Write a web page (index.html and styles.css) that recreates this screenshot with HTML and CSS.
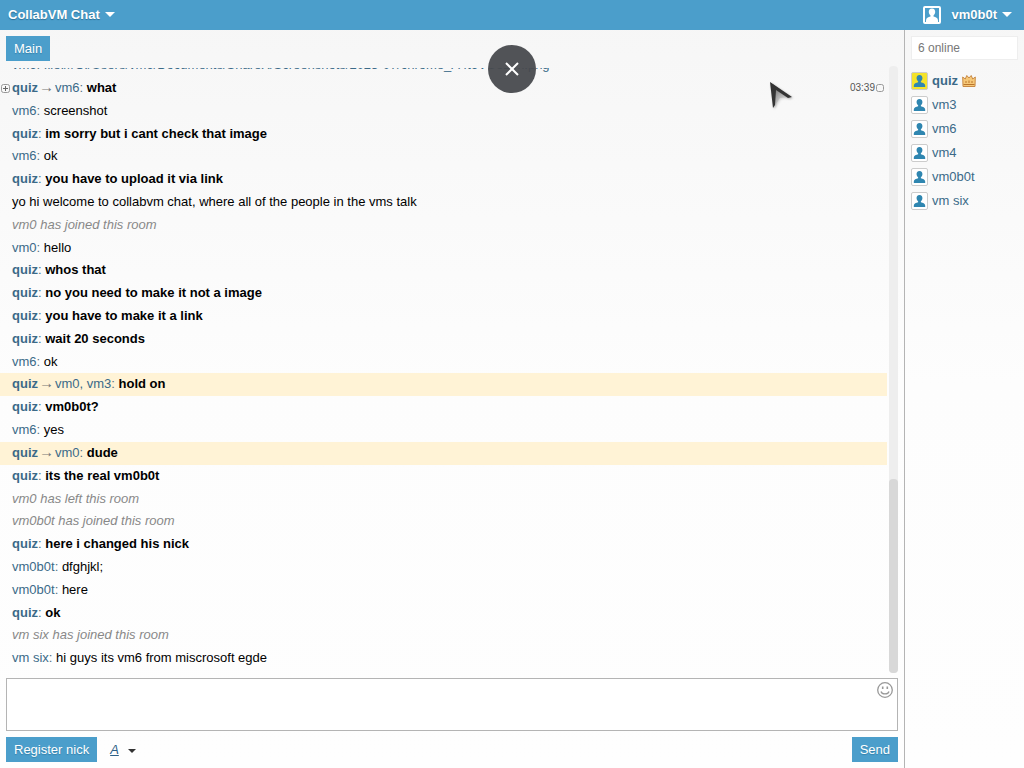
FILE: index.html
```html
<!DOCTYPE html>
<html lang="en">
<head>
    <meta charset="UTF-8">
    <meta name="viewport" content="width=device-width, initial-scale=1.0">
    <title>CollabVM Chat</title>
    <link rel="stylesheet" href="styles.css">
</head>
<body>

<!-- Shared icons -->
<svg class="sprite" aria-hidden="true">
    <symbol id="person" viewBox="0 0 16 16">
        <path d="M8 .5C5.400.5 4.300 2.400 4.400 4.700c.1 1.700.9 3 1.900 3.700v1.100C4 10.100 1 10.900 1 13.400V15.500h14v-2.100c0-2.500-3-3.300-5.300-3.900V8.400c1-.7 1.800-2 1.900-3.700C11.700 2.400 10.600.5 8 .5z"/>
    </symbol>
</svg>

<header class="top-bar">
    <button type="button" class="menu-button">CollabVM Chat <span class="caret"></span></button>
    <button type="button" class="menu-button">
        <svg class="my-avatar" viewBox="0 0 18 18" aria-hidden="true">
            <rect x="1" y="1" width="16" height="16" rx="1" fill="#4b9ecb" stroke="#fff" stroke-width="2"/>
            <path fill="#fff" d="M9 2.500c-2.300 0-3.300 1.600-3.200 3.500.1 1.600.8 2.700 1.700 3.400v1.200C5.300 11.200 3 12 3 14.500V17h12v-2.500c0-2.500-2.300-3.300-4.500-3.900V9.400c.9-.7 1.600-1.800 1.700-3.400.1-1.900-.9-3.500-3.200-3.500z"/>
        </svg>
        <span class="my-nick">vm0b0t</span> <span class="caret"></span>
    </button>
</header>

<div class="chat">
    <main class="room">
        <nav class="tabs">
            <button type="button" class="button">Main</button>
        </nav>

        <!-- Message log -->
        <div class="log">
            <ul class="messages">
                <li><a href="#">vm6</a>: <a href="#">file:///C:/Users/vm6/Documents/ShareX/Screenshots/2023-07/chrome_A4t6VUe2im.png</a></li>
                <li class="first owner">
                    <svg class="expand" viewBox="0 0 9 9" aria-hidden="true">
                        <rect x=".5" y=".5" width="8" height="8" rx="2" fill="none" stroke="#999"/>
                        <path d="M2 4.500h5M4.500 2v5" stroke="#666"/>
                    </svg>
                    <a href="#">quiz</a><span class="arrow">→</span><a href="#" class="to">vm6</a>: <b>what</b>
                    <span class="stamp">03:39<svg viewBox="0 0 8 8" aria-hidden="true"><rect x=".5" y=".5" width="7" height="7" rx="2" fill="none" stroke="#999"/></svg></span>
                </li>
                <li><a href="#">vm6</a>: <span>screenshot</span></li>
                <li class="owner"><a href="#">quiz</a>: <b>im sorry but i cant check that image</b></li>
                <li><a href="#">vm6</a>: <span>ok</span></li>
                <li class="owner"><a href="#">quiz</a>: <b>you have to upload it via link</b></li>
                <li><span>yo hi welcome to collabvm chat, where all of the people in the vms talk</span></li>
                <li class="system">vm0 has joined this room</li>
                <li><a href="#">vm0</a>: <span>hello</span></li>
                <li class="owner"><a href="#">quiz</a>: <b>whos that</b></li>
                <li class="owner"><a href="#">quiz</a>: <b>no you need to make it not a image</b></li>
                <li class="owner"><a href="#">quiz</a>: <b>you have to make it a link</b></li>
                <li class="owner"><a href="#">quiz</a>: <b>wait 20 seconds</b></li>
                <li><a href="#">vm6</a>: <span>ok</span></li>
                <li class="owner mention"><a href="#">quiz</a><span class="arrow">→</span><a href="#" class="to">vm0, vm3</a>: <b>hold on</b></li>
                <li class="owner"><a href="#">quiz</a>: <b>vm0b0t?</b></li>
                <li><a href="#">vm6</a>: <span>yes</span></li>
                <li class="owner mention"><a href="#">quiz</a><span class="arrow">→</span><a href="#" class="to">vm0</a>: <b>dude</b></li>
                <li class="owner"><a href="#">quiz</a>: <b>its the real vm0b0t</b></li>
                <li class="system">vm0 has left this room</li>
                <li class="system">vm0b0t has joined this room</li>
                <li class="owner"><a href="#">quiz</a>: <b>here i changed his nick</b></li>
                <li><a href="#">vm0b0t</a>: <span>dfghjkl;</span></li>
                <li><a href="#">vm0b0t</a>: <span>here</span></li>
                <li class="owner"><a href="#">quiz</a>: <b>ok</b></li>
                <li class="system">vm six has joined this room</li>
                <li><a href="#">vm six</a>: <span>hi guys its vm6 from miscrosoft egde</span></li>
            </ul>
            <div class="scrollbar"><div class="thumb"></div></div>
        </div>

        <!-- Message form -->
        <form class="composer">
            <div class="input-box">
                <textarea class="message-input" aria-label="Message"></textarea>
                <button type="button" class="smile" aria-label="Smileys">
                    <svg viewBox="0 0 16 16" fill="none" stroke="#999" aria-hidden="true">
                        <circle cx="8" cy="8" r="7.300" stroke-width="1.300"/>
                        <path d="M4 9.500c1 3.200 7 3.200 8 0" stroke-width="1.300"/>
                        <path d="M5.700 4.500v2.500M10.300 4.500v2.500" stroke-width="1.600"/>
                    </svg>
                </button>
            </div>
            <div class="actions">
                <button type="button" class="button">Register nick</button>
                <button type="button" class="format"><span class="letter">A</span> <span class="caret"></span></button>
                <button type="submit" class="button send">Send</button>
            </div>
        </form>
    </main>

    <aside class="people">
        <input type="text" class="search" placeholder="6 online" aria-label="Search people">
        <ul class="people-list">
            <li class="owner">
                <svg class="avatar"><use href="#person"/></svg>
                <a href="#">quiz</a>
                <svg class="crown" viewBox="0 0 14 14" aria-hidden="true">
                    <path d="M1 12.500L.7 3l2.600 2L4.800 1.500 7 4l2.200-2.500 1.500 3.500L13.300 3l-.3 9.500z" fill="#f6c878" stroke="#c98a45"/>
                    <path d="M1.500 10.500h11M4 7v2M7 6.500V9M10 7v2" stroke="#b9742c"/>
                </svg>
            </li>
            <li><svg class="avatar"><use href="#person"/></svg><a href="#">vm3</a></li>
            <li><svg class="avatar"><use href="#person"/></svg><a href="#">vm6</a></li>
            <li><svg class="avatar"><use href="#person"/></svg><a href="#">vm4</a></li>
            <li><svg class="avatar"><use href="#person"/></svg><a href="#">vm0b0t</a></li>
            <li><svg class="avatar"><use href="#person"/></svg><a href="#">vm six</a></li>
        </ul>
    </aside>
</div>

<!-- Floating close button -->
<button type="button" class="close" aria-label="Close">
    <svg viewBox="0 0 14 14" aria-hidden="true"><path d="M1 1l12 12M13 1L1 13" stroke="#fff" stroke-width="2"/></svg>
</button>

<!-- Mouse pointer -->
<svg class="pointer" viewBox="0 0 28 32" aria-hidden="true">
    <defs>
        <linearGradient id="shade" x1="0" y1="0" x2=".6" y2="1">
            <stop offset="0" stop-color="#444"/>
            <stop offset="1" stop-color="#ccc" stop-opacity=".2"/>
        </linearGradient>
    </defs>
    <path d="M3 3l20 14-11 1-6 9z" fill="url(#shade)"/>
    <path d="M2 2l22 15-4 1L8 10 7 25l-2 3z" fill="#333"/>
</svg>

</body>
</html>
```
FILE: styles.css
```css
* {
    margin: 0;
    padding: 0;
    box-sizing: border-box;
}

body {
    display: flex;
    flex-direction: column;
    height: 100vh;
    font: 13px "Liberation Sans", Arial, sans-serif;
    color: #000;
    background: linear-gradient(#f6f6f6, #fdfdfd 50%, #fefefe);
}

button,
input,
textarea {
    font: inherit;
    border: none;
    background: none;
}

ul {
    list-style: none;
}

a {
    color: #3b6a88;
    text-decoration: none;
}

svg {
    display: block;
    flex: none;
}

.sprite {
    position: absolute;
    width: 0;
    height: 0;
}

.caret {
    border: 5px solid transparent;
    border-top-color: currentColor;
    border-bottom: none;
}

/* Header */
.top-bar {
    display: flex;
    justify-content: space-between;
    height: 30px;
    padding: 0 12px 1px 8px;
    background: #4b9ecb;
}

.menu-button {
    display: flex;
    align-items: center;
    gap: 5px;
    font-weight: bold;
    color: #fff;
    text-shadow: 0 1px 1px #2c7096;
}

.my-avatar {
    width: 18px;
    height: 18px;
    margin-right: 5px;
}

.chat {
    display: flex;
    flex: 1;
    min-height: 0;
}

/* Room */
.room {
    display: flex;
    flex-direction: column;
    flex: 1;
    min-width: 0;
    padding: 6px 6px 6px 0;
}

.tabs,
.composer {
    padding-left: 6px;
}

.button {
    height: 25px;
    padding: 0 8px;
    color: #fff;
    background: #4b9ecb;
    text-shadow: 0 1px 1px #3580aa;
}

.log {
    display: flex;
    flex: 1;
    gap: 2px;
    min-height: 0;
    margin: 5px 0;
}

.messages {
    display: flex;
    flex-direction: column;
    justify-content: flex-end;
    flex: 1;
    overflow: hidden;
    margin-top: 2px;
    padding-bottom: 3px;
    line-height: 1.755;
}

.messages li {
    flex: none;
    padding-left: 12px;
    color: #557080;
}

.messages b,
.messages li > span {
    color: #000;
}

.messages .owner a {
    font-weight: bold;
}

.messages .owner .to {
    font-weight: normal;
}

.messages .system {
    font-style: italic;
    color: #888;
}

.messages .mention {
    background: #fff3d6;
}

.messages .arrow {
    margin: 0 1px;
    font-size: 15px;
    line-height: 1;
    color: #777;
}

.messages .first {
    position: relative;
}

.expand {
    position: absolute;
    left: 1px;
    top: 7px;
    width: 9px;
    height: 9px;
}

.messages .stamp {
    display: flex;
    align-items: center;
    gap: 1px;
    float: right;
    margin-right: 3px;
    font-size: 10px;
    line-height: 22px;
    color: #555;
}

.stamp svg {
    width: 8px;
    height: 8px;
}

.scrollbar {
    display: flex;
    align-items: flex-end;
    width: 9px;
    border-radius: 4px;
    background: #eee;
}

.thumb {
    width: 100%;
    height: 32%;
    border-radius: 4px;
    background: #d8d8d8;
}

/* Message form */
.input-box {
    display: flex;
    align-items: flex-start;
    height: 53px;
    padding: 3px 4px;
    border: 1px solid #b4b4b4;
    background: #fff;
}

.message-input {
    flex: 1;
    height: 100%;
    resize: none;
    outline: none;
}

.smile svg {
    width: 16px;
    height: 16px;
}

.actions {
    display: flex;
    margin-top: 6px;
}

.format {
    display: flex;
    align-items: center;
    gap: 9px;
    margin-left: 13px;
    color: #2d6087;
}

.letter {
    font-style: italic;
    text-decoration: underline;
}

.format .caret {
    border-width: 4px;
    border-bottom: none;
    border-top-color: #333;
    margin-top: 3px;
}

.send {
    margin-left: auto;
}

/* People */
.people {
    width: 120px;
    padding: 6px;
    border-left: 1px solid #b4b4b4;
}

.search {
    width: 100%;
    height: 24px;
    padding: 0 6px;
    font-size: 12px;
    border: 1px solid #eee;
    background: #fff;
}

.search::placeholder {
    color: #777;
}

.people-list {
    margin-top: 9px;
}

.people-list li {
    display: flex;
    align-items: center;
    gap: 4px;
    height: 24px;
}

.people-list a {
    padding-bottom: 2px;
}

.people-list .owner {
    font-weight: bold;
}

.avatar {
    width: 17px;
    height: 18px;
    padding: 1px;
    border: 1px solid #ccc;
    border-radius: 2px;
    background: #fff;
    fill: #2f86b0;
}

.owner .avatar {
    background: #f4e32a;
}

.crown {
    width: 14px;
    height: 14px;
}

/* Overlays */
.close {
    position: absolute;
    top: 45px;
    left: 50%;
    display: flex;
    align-items: center;
    justify-content: center;
    width: 48px;
    height: 48px;
    margin-left: -24px;
    border-radius: 50%;
    background: rgba(70, 72, 76, 0.94);
}

.close svg {
    width: 14px;
    height: 14px;
}

.pointer {
    position: absolute;
    top: 80px;
    left: 768px;
    width: 28px;
    height: 32px;
    filter: drop-shadow(1px 1px 1px rgba(0, 0, 0, 0.3));
}
```
